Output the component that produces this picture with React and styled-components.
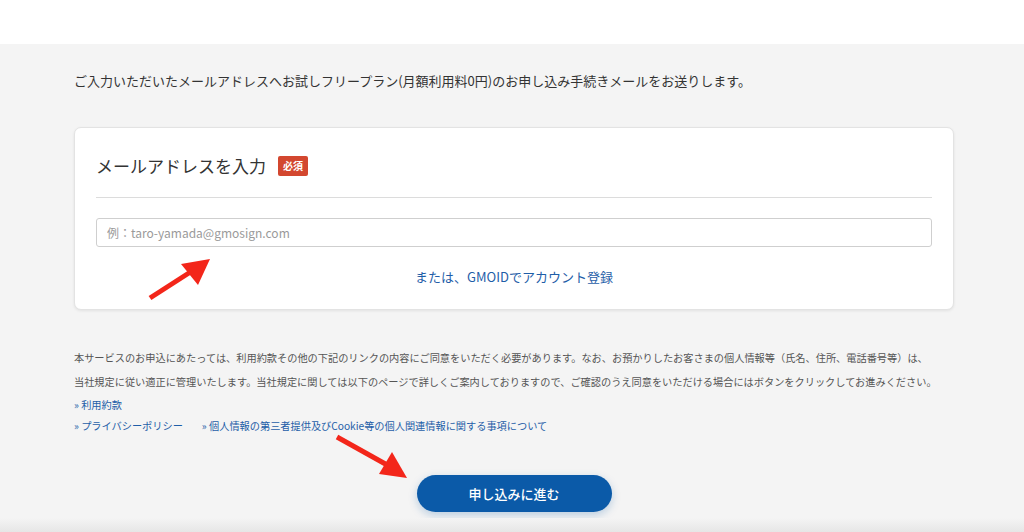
import React from "react";
import styled, { createGlobalStyle } from "styled-components";

const GlobalStyle = createGlobalStyle`
  html, body {
    margin: 0;
    padding: 0;
    background: #f4f4f4;
  }
  body {
    font-family: "Noto Sans CJK JP", "Noto Sans", "Liberation Sans", sans-serif;
    color: #333;
  }
`;

const Page = styled.div`
  position: relative;
  width: 1024px;
  height: 532px;
  overflow: hidden;
  display: flex;
  flex-direction: column;
`;

const Header = styled.header`
  height: 44px;
  background: #fff;
  flex-shrink: 0;
`;

const Main = styled.main`
  flex: 1;
  background: #f4f4f4;
  padding: 27px 70px 0 74px;
  display: flex;
  flex-direction: column;
`;

const Intro = styled.p`
  margin: 0;
  font-size: 13px;
  line-height: 20px;
  color: #333;
  white-space: nowrap;
`;

const Card = styled.section`
  margin-top: 36px;
  width: 880px;
  box-sizing: border-box;
  background: #fff;
  border: 1px solid #e3e3e3;
  border-radius: 7px;
  box-shadow: 0 1px 3px rgba(0, 0, 0, 0.08);
  padding: 25px 21px 22px;
`;

const TitleRow = styled.div`
  display: flex;
  align-items: center;
  gap: 12px;
  padding-bottom: 18px;
  border-bottom: 1px solid #dcdcdc;
`;

const Title = styled.h2`
  margin: 0;
  font-size: 17px;
  font-weight: 400;
  line-height: 26px;
  color: #333;
`;

const Badge = styled.span`
  background: #d3472f;
  color: #fff;
  font-size: 10px;
  font-weight: 700;
  line-height: 20px;
  padding: 0 5px;
  border-radius: 2px;
`;

const Input = styled.input`
  display: block;
  margin-top: 20px;
  width: 100%;
  height: 29px;
  box-sizing: border-box;
  border: 1px solid #cfcfcf;
  border-radius: 3px;
  padding: 0 10px;
  font-family: inherit;
  font-size: 12px;
  color: #333;
  outline: none;
  &::placeholder {
    color: #9a9a9a;
  }
`;

const CenterLink = styled.a`
  display: block;
  margin-top: 20px;
  text-align: center;
  font-size: 13px;
  line-height: 20px;
  color: #1f5ea8;
  text-decoration: none;
`;

const Terms = styled.div`
  margin-top: 36px;
  font-size: 10.2px;
  line-height: 24px;
  color: #555;
  white-space: nowrap;
`;

const TermsLine = styled.div``;

const LinkRow = styled.div`
  display: flex;
  gap: 19px;
  line-height: 21px;
`;

const TermLink = styled.a`
  font-size: 10.2px;
  color: #1f5ea8;
  text-decoration: none;
`;

const ButtonRow = styled.div`
  display: flex;
  justify-content: center;
  margin-top: 39px;
`;

const SubmitButton = styled.button`
  width: 195px;
  height: 37px;
  border: none;
  border-radius: 19px;
  background: #0b5aa8;
  color: #fff;
  font-family: inherit;
  font-size: 13px;
  font-weight: 500;
  box-shadow: 0 3px 8px rgba(11, 90, 168, 0.25);
  cursor: pointer;
`;

const Footer = styled.div`
  height: 14px;
  flex-shrink: 0;
  background: linear-gradient(#f4f4f4, #e6e6e6);
`;

const Overlay = styled.svg`
  position: absolute;
  left: 0;
  top: 0;
  pointer-events: none;
`;

const Arrow = ({ shaft, head }) => (
  <g>
    <line
      x1={shaft[0]}
      y1={shaft[1]}
      x2={shaft[2]}
      y2={shaft[3]}
      stroke="#f3261a"
      strokeWidth="5"
    />
    <polygon points={head} fill="#f3261a" />
  </g>
);

const App = () => {
  return (
    <>
      <GlobalStyle />
      <Page>
        <Header />
        <Main>
          <Intro>
            ご入力いただいたメールアドレスへお試しフリープラン(月額利用料0円)のお申し込み手続きメールをお送りします。
          </Intro>
          <Card>
            <TitleRow>
              <Title>メールアドレスを入力</Title>
              <Badge>必須</Badge>
            </TitleRow>
            <Input placeholder="例：taro-yamada@gmosign.com" />
            <CenterLink href="#">または、GMOIDでアカウント登録</CenterLink>
          </Card>
          <Terms>
            <TermsLine>
              本サービスのお申込にあたっては、利用約款その他の下記のリンクの内容にご同意をいただく必要があります。なお、お預かりしたお客さまの個人情報等（氏名、住所、電話番号等）は、
            </TermsLine>
            <TermsLine>
              当社規定に従い適正に管理いたします。当社規定に関しては以下のページで詳しくご案内しておりますので、ご確認のうえ同意をいただける場合にはボタンをクリックしてお進みください。
            </TermsLine>
            <LinkRow>
              <TermLink href="#">» 利用約款</TermLink>
            </LinkRow>
            <LinkRow>
              <TermLink href="#">» プライバシーポリシー</TermLink>
              <TermLink href="#">
                » 個人情報の第三者提供及びCookie等の個人関連情報に関する事項について
              </TermLink>
            </LinkRow>
          </Terms>
          <ButtonRow>
            <SubmitButton>申し込みに進む</SubmitButton>
          </ButtonRow>
        </Main>
        <Footer />
        <Overlay width="1024" height="532" viewBox="0 0 1024 532">
          <Arrow shaft={[150, 298, 192, 271]} head="210,259 181,264 198,285" />
          <Arrow shaft={[337, 437, 389, 466]} head="407,478 392,452 379,474" />
        </Overlay>
      </Page>
    </>
  );
};

export default App;
